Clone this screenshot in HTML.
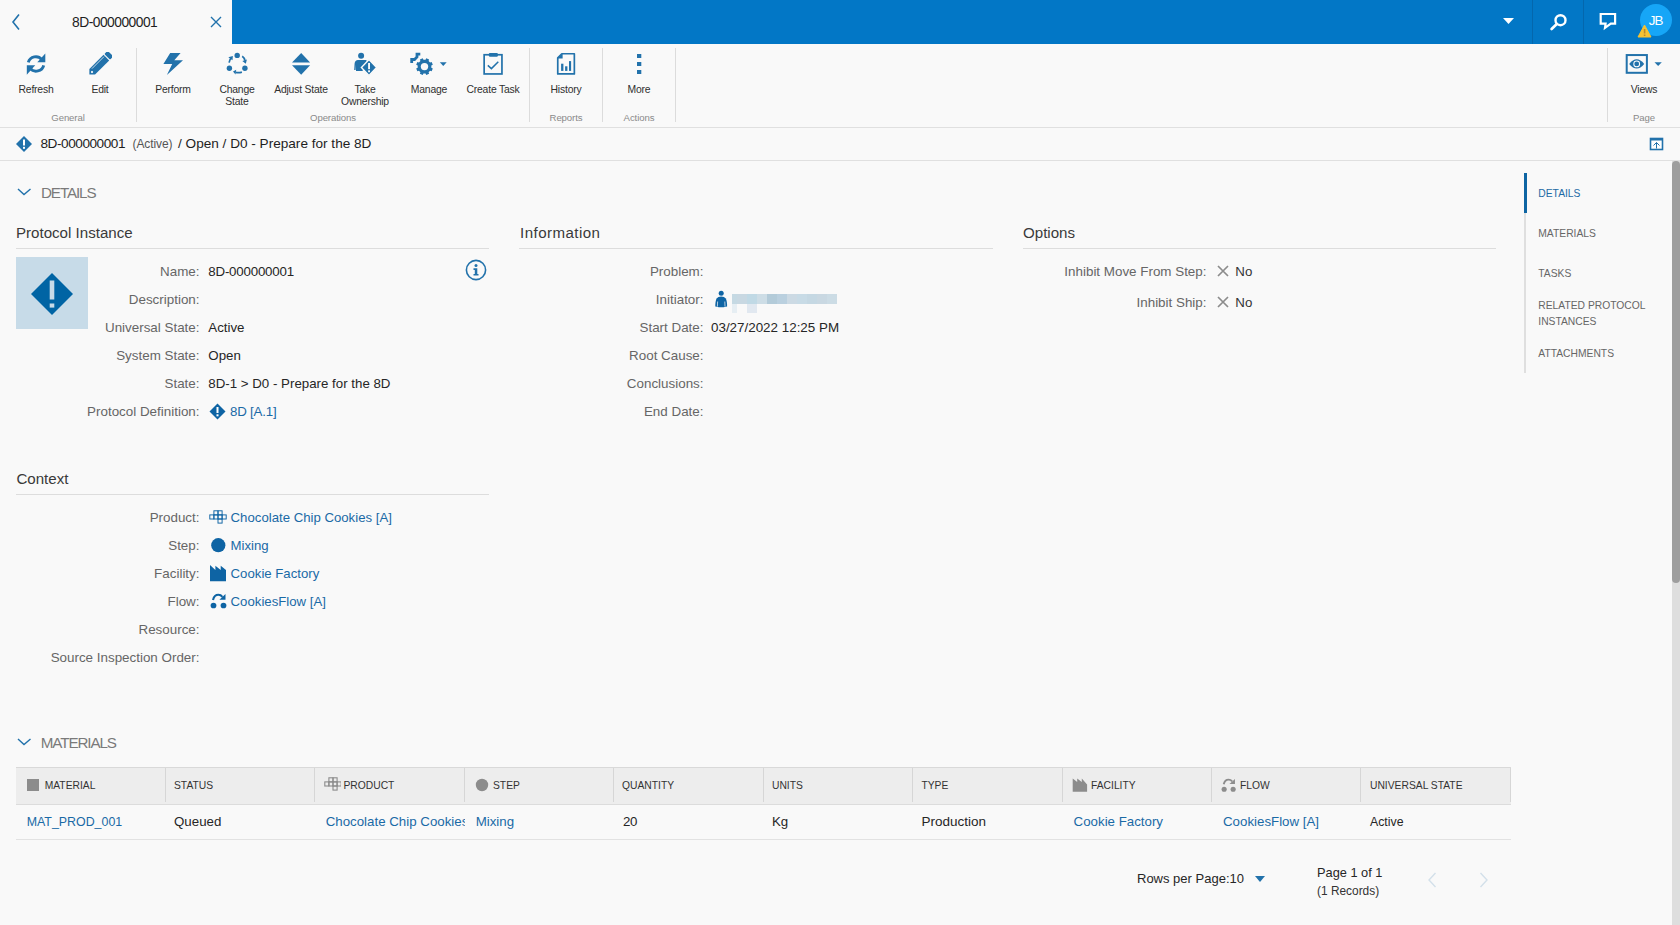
<!DOCTYPE html>
<html><head><meta charset="utf-8"><title>8D-000000001</title>
<style>
html,body{margin:0;padding:0;}
body{width:1680px;height:925px;overflow:hidden;position:relative;background:#f9f9f9;font-family:"Liberation Sans",sans-serif;}
.t{position:absolute;line-height:1;white-space:nowrap;}
.r{position:absolute;display:block;}
</style></head><body>
<div class="r" style="left:0px;top:0px;width:232px;height:44px;background:#f9f9f9;"></div>
<div class="r" style="left:232px;top:0px;width:1448px;height:44px;background:#0277c6;"></div>
<svg class="r" style="left:10px;top:12px" width="12" height="20" viewBox="0 0 12 20"><polyline points="9,2.5 3,10 9,17.5" fill="none" stroke="#2272ab" stroke-width="1.6"/></svg>
<div class="t" style="top:15.92px;font-size:13.8px;color:#1e1e1e;letter-spacing:-0.5px;left:72px;">8D-000000001</div>
<svg class="r" style="left:209px;top:15px" width="14" height="14" viewBox="0 0 14 14"><path d="M2 2 L12 12 M12 2 L2 12" stroke="#2272ab" stroke-width="1.4" fill="none"/></svg>
<svg class="r" style="left:1502px;top:17px" width="13" height="8" viewBox="0 0 13 8"><polygon points="1,1 12,1 6.5,7" fill="#fff"/></svg>
<div class="r" style="left:1532px;top:0px;width:1px;height:44px;background:#0467ad;"></div>
<div class="r" style="left:1583px;top:0px;width:1px;height:44px;background:#0467ad;"></div>
<svg class="r" style="left:1548px;top:12px" width="22" height="20" viewBox="0 0 22 20"><circle cx="12.5" cy="8.2" r="5" fill="none" stroke="#fff" stroke-width="2.4"/><line x1="8.8" y1="12" x2="3.6" y2="17" stroke="#fff" stroke-width="2.7" stroke-linecap="round"/></svg>
<svg class="r" style="left:1598px;top:12px" width="21" height="19" viewBox="0 0 21 19"><path d="M2.7 2 H17.1 V11.7 H12.8 L7 15.8 L7.6 11.7 H2.7 Z" fill="none" stroke="#fff" stroke-width="2.2" stroke-linejoin="miter"/></svg>
<div class="r" style="left:1640px;top:4px;width:32px;height:32px;border-radius:50%;background:#16a6f7"></div>
<div class="t" style="top:13.96px;font-size:13.4px;color:#fff;letter-spacing:-0.9px;left:1455.6px;width:400px;text-align:center;">JB</div>
<svg class="r" style="left:1637px;top:24px" width="15" height="14" viewBox="0 0 15 14"><polygon points="7.5,1 14,13 1,13" fill="#f6c232" stroke="#f6c232" stroke-width="1" stroke-linejoin="round"/><rect x="6.8" y="5" width="1.6" height="4.5" fill="#b9892a"/><rect x="6.8" y="10.5" width="1.6" height="1.5" fill="#b9892a"/></svg>
<div class="r" style="left:0px;top:44px;width:1680px;height:83px;background:#f9f9f9;"></div>
<div class="r" style="left:0px;top:127px;width:1680px;height:1px;background:#e0e0e0;"></div>
<div class="r" style="left:136px;top:48px;width:1px;height:74px;background:#dcdcdc;"></div>
<div class="r" style="left:529px;top:48px;width:1px;height:74px;background:#dcdcdc;"></div>
<div class="r" style="left:602px;top:48px;width:1px;height:74px;background:#dcdcdc;"></div>
<div class="r" style="left:675px;top:48px;width:1px;height:74px;background:#dcdcdc;"></div>
<div class="r" style="left:1607px;top:48px;width:1px;height:74px;background:#dcdcdc;"></div>
<svg class="r" style="left:25px;top:52px" width="22" height="24" viewBox="0 0 22 24"><g fill="none" stroke="#2272ab" stroke-width="2.9"><path d="M3.3 10.3 A7.8 7.8 0 0 1 16.8 7.6"/><path d="M18.7 13.3 A7.8 7.8 0 0 1 5.2 16.4"/></g><polygon points="20.3,1.4 20.3,10.3 12.3,10.3" fill="#2272ab"/><polygon points="1.8,13.3 10.2,13.3 1.8,22.8" fill="#2272ab"/></svg>
<div class="t" style="top:85.20px;font-size:10.4px;color:#303030;letter-spacing:-0.2px;left:-164px;width:400px;text-align:center;">Refresh</div>
<svg class="r" style="left:88px;top:52px" width="24" height="24" viewBox="0 0 24 24"><g transform="translate(12,12) rotate(-45)"><polygon points="-15,0 -11,-4 9,-4 9,4 -11,4" fill="#2272ab"/><rect x="10.2" y="-4" width="4.6" height="8" rx="1" fill="#2272ab"/><line x1="-9" y1="-2.4" x2="8" y2="-2.4" stroke="#f9f9f9" stroke-width="0.7"/><circle cx="-11.3" cy="0" r="1.1" fill="#f9f9f9"/></g></svg>
<div class="t" style="top:85.20px;font-size:10.4px;color:#303030;letter-spacing:-0.2px;left:-100px;width:400px;text-align:center;">Edit</div>
<svg class="r" style="left:162px;top:52px" width="22" height="24" viewBox="0 0 22 24"><polygon points="8.2,1.1 18.6,1.1 12.3,8.2 21,8.2 4.9,23.1 10.2,12.1 1.4,12.1" fill="#2272ab"/></svg>
<div class="t" style="top:85.20px;font-size:10.4px;color:#303030;letter-spacing:-0.2px;left:-27px;width:400px;text-align:center;">Perform</div>
<svg class="r" style="left:226px;top:52px" width="23" height="24" viewBox="0 0 23 24"><g fill="#2272ab"><circle cx="11.2" cy="3.4" r="2.7"/><circle cx="3.4" cy="16.2" r="2.7"/><circle cx="18.9" cy="16.2" r="2.7"/></g><g fill="none" stroke="#2272ab" stroke-width="1.7"><path d="M3.1 10.6 Q3.6 7.4 5.4 5.6"/><path d="M16.2 4.3 Q18.3 5.8 19 8.6"/><path d="M15.9 20.1 Q13 21 9.6 20.4"/></g><g fill="#2272ab"><polygon points="2.3,5.2 6.9,3.9 6.5,8.2"/><polygon points="16.3,8.9 20.9,7.6 19.8,11.8"/><polygon points="7,19.6 10.2,17.8 9.5,22.5"/></g></svg>
<div class="t" style="top:85.20px;font-size:10.4px;color:#303030;letter-spacing:-0.2px;left:37px;width:400px;text-align:center;">Change</div>
<div class="t" style="top:97.20px;font-size:10.4px;color:#303030;letter-spacing:-0.2px;left:37px;width:400px;text-align:center;">State</div>
<svg class="r" style="left:291px;top:52px" width="20" height="24" viewBox="0 0 20 24"><polygon points="10.2,1.1 19.1,10.6 1,10.6" fill="#2272ab"/><polygon points="1,13.3 19.1,13.3 10.2,22.8" fill="#2272ab"/></svg>
<div class="t" style="top:85.20px;font-size:10.4px;color:#303030;letter-spacing:-0.2px;left:101px;width:400px;text-align:center;">Adjust State</div>
<svg class="r" style="left:353px;top:52px" width="25" height="25" viewBox="0 0 25 25"><circle cx="8.1" cy="3.7" r="3" fill="#2272ab"/><path d="M1.2 18 L1.6 11.5 Q2 7.9 5 7.9 L13 7.9 L14 9 L9.5 19 L3 19 L3 12.5 L2.6 18 Z" fill="#2272ab"/><polygon points="16,7.5 23.6,15.6 16,23.6 8.4,15.6" fill="#2272ab" stroke="#f9f9f9" stroke-width="1.4"/><rect x="15.1" y="11" width="1.9" height="6.2" fill="#f9f9f9"/><rect x="15.1" y="18.3" width="1.9" height="1.9" fill="#f9f9f9"/></svg>
<div class="t" style="top:85.20px;font-size:10.4px;color:#303030;letter-spacing:-0.2px;left:165px;width:400px;text-align:center;">Take</div>
<div class="t" style="top:97.20px;font-size:10.4px;color:#303030;letter-spacing:-0.2px;left:165px;width:400px;text-align:center;">Ownership</div>
<svg class="r" style="left:410px;top:52px" width="38" height="25" viewBox="0 0 38 25"><path d="M15.53 7.78 L16.29 6.29 L19.11 7.46 L18.60 9.05 L20.05 10.50 L21.64 9.99 L22.81 12.81 L21.32 13.57 L21.32 15.63 L22.81 16.39 L21.64 19.21 L20.05 18.70 L18.60 20.15 L19.11 21.74 L16.29 22.91 L15.53 21.42 L13.47 21.42 L12.71 22.91 L9.89 21.74 L10.40 20.15 L8.95 18.70 L7.36 19.21 L6.19 16.39 L7.68 15.63 L7.68 13.57 L6.19 12.81 L7.36 9.99 L8.95 10.50 L10.40 9.05 L9.89 7.46 L12.71 6.29 L13.47 7.78 Z" fill="#2272ab"/><circle cx="14.5" cy="14.6" r="3.7" fill="#f9f9f9"/><path d="M1.7 11 L1.7 7.5 L4.5 7.5 L7 5 L7 2.2 L10.3 2.2" fill="none" stroke="#2272ab" stroke-width="2.8" stroke-linejoin="miter"/><polygon points="29.8,10.2 36.7,10.2 33.25,14" fill="#2272ab"/></svg>
<div class="t" style="top:85.20px;font-size:10.4px;color:#303030;letter-spacing:-0.2px;left:229px;width:400px;text-align:center;">Manage</div>
<svg class="r" style="left:482px;top:52px" width="22" height="24" viewBox="0 0 22 24"><rect x="2.15" y="2.75" width="17.8" height="19.2" fill="none" stroke="#2272ab" stroke-width="1.7"/><rect x="6.8" y="0.9" width="9.1" height="3.9" rx="1.2" fill="#2272ab"/><polyline points="5.8,13.4 9.4,16.6 16.3,9.8" fill="none" stroke="#2272ab" stroke-width="1.5"/></svg>
<div class="t" style="top:85.20px;font-size:10.4px;color:#303030;letter-spacing:-0.2px;left:293px;width:400px;text-align:center;">Create Task</div>
<svg class="r" style="left:556px;top:52px" width="20" height="24" viewBox="0 0 20 24"><path d="M1.75 5.8 L5.8 1.75 L18.35 1.75 L18.35 21.95 L1.75 21.95 Z" fill="none" stroke="#2272ab" stroke-width="1.7" stroke-linejoin="round"/><polygon points="1.5,6.6 6.6,1.5 6.6,6.6" fill="#2272ab"/><rect x="5.1" y="11.7" width="2.3" height="7.2" fill="#2272ab"/><rect x="9.1" y="14.3" width="2.3" height="4.6" fill="#2272ab"/><rect x="13" y="9.1" width="2.1" height="9.8" fill="#2272ab"/></svg>
<div class="t" style="top:85.20px;font-size:10.4px;color:#303030;letter-spacing:-0.2px;left:366px;width:400px;text-align:center;">History</div>
<svg class="r" style="left:637px;top:52px" width="5" height="24" viewBox="0 0 5 24"><rect x="0" y="2" width="4.3" height="4" fill="#2272ab"/><rect x="0" y="10" width="4.3" height="4" fill="#2272ab"/><rect x="0" y="18" width="4.3" height="4" fill="#2272ab"/></svg>
<div class="t" style="top:85.20px;font-size:10.4px;color:#303030;letter-spacing:-0.2px;left:439px;width:400px;text-align:center;">More</div>
<svg class="r" style="left:1625px;top:53px" width="38" height="22" viewBox="0 0 38 22"><rect x="1.7" y="2.05" width="20.2" height="17.75" fill="none" stroke="#2272ab" stroke-width="2"/><path d="M4.2 10.9 Q11.7 1.6 19.2 10.9 Q11.7 20.2 4.2 10.9 Z" fill="#2272ab"/><circle cx="11.7" cy="10.9" r="3.4" fill="#fff"/><circle cx="11.7" cy="10.9" r="2.4" fill="#2272ab"/><polygon points="29.5,9.2 36.8,9.2 33.15,13" fill="#2272ab"/></svg>
<div class="t" style="top:85.20px;font-size:10.4px;color:#303030;letter-spacing:-0.2px;left:1444px;width:400px;text-align:center;">Views</div>
<div class="t" style="top:113.17px;font-size:9.6px;color:#8a8a8a;letter-spacing:-0.1px;left:-132px;width:400px;text-align:center;">General</div>
<div class="t" style="top:113.17px;font-size:9.6px;color:#8a8a8a;letter-spacing:-0.1px;left:133px;width:400px;text-align:center;">Operations</div>
<div class="t" style="top:113.17px;font-size:9.6px;color:#8a8a8a;letter-spacing:-0.1px;left:366px;width:400px;text-align:center;">Reports</div>
<div class="t" style="top:113.17px;font-size:9.6px;color:#8a8a8a;letter-spacing:-0.1px;left:439px;width:400px;text-align:center;">Actions</div>
<div class="t" style="top:113.17px;font-size:9.6px;color:#8a8a8a;letter-spacing:-0.1px;left:1444px;width:400px;text-align:center;">Page</div>
<div class="r" style="left:0px;top:160px;width:1680px;height:1px;background:#e0e0e0;"></div>
<svg class="r" style="left:16px;top:136px" width="16" height="16" viewBox="0 0 16 16"><polygon points="8,0 16,8 8,16 0,8" fill="#2272ab"/><rect x="7" y="3.5" width="2" height="6" fill="#fff"/><rect x="7" y="10.8" width="2" height="2" fill="#fff"/></svg>
<div class="t" style="top:137.29px;font-size:13.6px;color:#1e1e1e;letter-spacing:-0.45px;left:40.5px;">8D-000000001</div>
<div class="t" style="top:138.04px;font-size:12px;color:#555;letter-spacing:-0.1px;left:132.5px;">(Active)</div>
<div class="t" style="top:137.29px;font-size:13.6px;color:#1e1e1e;left:178px;">/ Open / D0 - Prepare for the 8D</div>
<svg class="r" style="left:1649px;top:137px" width="15" height="14" viewBox="0 0 15 14"><rect x="1.5" y="1.5" width="12" height="11" fill="#fff" stroke="#2272ab" stroke-width="1.6"/><rect x="1" y="1" width="13" height="2.5" fill="#2272ab"/><path d="M7.5 11.5 V5.5 M4.5 8.5 L7.5 5.5 L10.5 8.5" fill="none" stroke="#2272ab" stroke-width="1"/></svg>
<div class="r" style="left:1672px;top:161px;width:8px;height:1680px;background:#dedede;"></div>
<div class="r" style="left:1672px;top:161px;width:8px;height:422px;background:#9e9e9e;border-radius:4px"></div>
<svg class="r" style="left:16px;top:186px" width="16" height="10" viewBox="0 0 16 10"><polyline points="2,3 8,8.6 14.5,3" fill="none" stroke="#2272ab" stroke-width="1.4"/></svg>
<div class="t" style="top:185.13px;font-size:15.2px;color:#7a7a7a;letter-spacing:-1.1px;left:41px;">DETAILS</div>
<div class="t" style="top:225.42px;font-size:15.1px;color:#3a3a3a;left:16px;">Protocol Instance</div>
<div class="r" style="left:16px;top:248px;width:473px;height:1px;background:#dddddd;"></div>
<div class="t" style="top:225.42px;font-size:15.1px;color:#3a3a3a;letter-spacing:0.45px;left:520px;">Information</div>
<div class="r" style="left:519px;top:248px;width:474px;height:1px;background:#dddddd;"></div>
<div class="r" style="left:519px;top:248px;width:1px;height:1px;background:#dddddd;"></div>
<div class="t" style="top:225.42px;font-size:15.1px;color:#3a3a3a;left:1023px;">Options</div>
<div class="r" style="left:1023px;top:248px;width:473px;height:1px;background:#dddddd;"></div>
<div class="r" style="left:16px;top:257px;width:72px;height:72px;background:#c7dbe8;"></div>
<svg class="r" style="left:31px;top:273px" width="42" height="42" viewBox="0 0 42 42"><polygon points="21,0 42,21 21,42 0,21" fill="#0064a4"/><rect x="18.7" y="7.5" width="4.6" height="19" fill="#c7dbe8"/><rect x="18.7" y="30.5" width="4.6" height="4.1" fill="#c7dbe8"/></svg>
<svg class="r" style="left:465px;top:259px" width="22" height="22" viewBox="0 0 22 22"><circle cx="11" cy="11" r="9.6" fill="none" stroke="#2272ab" stroke-width="1.6"/><circle cx="11" cy="6.5" r="1.5" fill="#2272ab"/><path d="M8.5 9.3 H12.3 V15 H13.5 V16.6 H8.5 V15 H9.8 V10.9 H8.5 Z" fill="#2272ab"/></svg>
<div class="t" style="top:264.66px;font-size:13.4px;color:#666666;right:1480.5px;white-space:nowrap;">Name:</div>
<div class="t" style="top:264.74px;font-size:13.3px;color:#262626;letter-spacing:-0.2px;left:208.3px;white-space:nowrap;">8D-000000001</div>
<div class="t" style="top:292.66px;font-size:13.4px;color:#666666;right:1480.5px;white-space:nowrap;">Description:</div>
<div class="t" style="top:320.66px;font-size:13.4px;color:#666666;right:1480.5px;white-space:nowrap;">Universal State:</div>
<div class="t" style="top:320.74px;font-size:13.3px;color:#262626;left:208.3px;white-space:nowrap;">Active</div>
<div class="t" style="top:348.66px;font-size:13.4px;color:#666666;right:1480.5px;white-space:nowrap;">System State:</div>
<div class="t" style="top:348.74px;font-size:13.3px;color:#262626;left:208.3px;white-space:nowrap;">Open</div>
<div class="t" style="top:376.66px;font-size:13.4px;color:#666666;right:1480.5px;white-space:nowrap;">State:</div>
<div class="t" style="top:376.74px;font-size:13.3px;color:#262626;left:208.3px;white-space:nowrap;">8D-1 &gt; D0 - Prepare for the 8D</div>
<div class="t" style="top:404.66px;font-size:13.4px;color:#666666;right:1480.5px;white-space:nowrap;">Protocol Definition:</div>
<svg class="r" style="left:209px;top:403px" width="17" height="17" viewBox="0 0 17 17"><polygon points="8.5,0.5 16.5,8.5 8.5,16.5 0.5,8.5" fill="#0e64a4"/><rect x="7.5" y="4" width="2" height="6" fill="#fff"/><rect x="7.5" y="11.3" width="2" height="2" fill="#fff"/></svg>
<div class="t" style="top:404.74px;font-size:13.3px;color:#1a6aa6;letter-spacing:-0.2px;left:230px;">8D [A.1]</div>
<div class="t" style="top:264.66px;font-size:13.4px;color:#666666;right:976.5px;white-space:nowrap;">Problem:</div>
<div class="t" style="top:292.66px;font-size:13.4px;color:#666666;right:976.5px;white-space:nowrap;">Initiator:</div>
<div class="t" style="top:320.66px;font-size:13.4px;color:#666666;right:976.5px;white-space:nowrap;">Start Date:</div>
<div class="t" style="top:348.66px;font-size:13.4px;color:#666666;right:976.5px;white-space:nowrap;">Root Cause:</div>
<div class="t" style="top:376.66px;font-size:13.4px;color:#666666;right:976.5px;white-space:nowrap;">Conclusions:</div>
<div class="t" style="top:404.66px;font-size:13.4px;color:#666666;right:976.5px;white-space:nowrap;">End Date:</div>
<div class="t" style="top:320.66px;font-size:13.4px;color:#262626;left:711px;white-space:nowrap;">03/27/2022 12:25 PM</div>
<svg class="r" style="left:714px;top:290px" width="15" height="18" viewBox="0 0 15 18"><circle cx="7.2" cy="3.2" r="2.5" fill="#0e64a4"/><path d="M1.3 16.5 Q1.3 11 2.6 8.6 Q4 6.6 7.2 6.6 Q10.4 6.6 11.8 8.6 Q13.1 11 13.1 16.5 L11.8 16.8 Q9.5 17.3 7.2 17.3 Q4.9 17.3 2.6 16.8 Z" fill="#0e64a4"/><path d="M3.6 11.5 L3.4 16.6 M10.8 11.5 L11 16.6" stroke="#f9f9f9" stroke-width="0.7"/></svg>
<div class="r" style="left:732.1px;top:293.8px;width:4.5px;height:10.1px;background:#c5d9e3;"></div>
<div class="r" style="left:736.6px;top:293.8px;width:10.3px;height:10.1px;background:#c8d8e2;"></div>
<div class="r" style="left:746.9px;top:293.8px;width:10.0px;height:10.1px;background:#c0d9e5;"></div>
<div class="r" style="left:756.9px;top:293.8px;width:10.1px;height:10.1px;background:#cddde6;"></div>
<div class="r" style="left:767px;top:293.8px;width:10px;height:10.1px;background:#b3cbd9;"></div>
<div class="r" style="left:777px;top:293.8px;width:10px;height:10.1px;background:#bad0df;"></div>
<div class="r" style="left:787px;top:293.8px;width:10px;height:10.1px;background:#ccdae4;"></div>
<div class="r" style="left:797px;top:293.8px;width:10px;height:10.1px;background:#c8dbe6;"></div>
<div class="r" style="left:807px;top:293.8px;width:10px;height:10.1px;background:#c5d8e3;"></div>
<div class="r" style="left:817px;top:293.8px;width:10px;height:10.1px;background:#c9d8e2;"></div>
<div class="r" style="left:827px;top:293.8px;width:10px;height:10.1px;background:#ccdce5;"></div>
<div class="r" style="left:732.1px;top:303.9px;width:4.5px;height:8.8px;background:#e6eef3;"></div>
<div class="r" style="left:746.9px;top:303.9px;width:10px;height:8.8px;background:#e1e8f0;"></div>
<div class="t" style="top:264.66px;font-size:13.4px;color:#666666;right:473.5px;white-space:nowrap;">Inhibit Move From Step:</div>
<svg class="r" style="left:1216px;top:265px" width="14" height="12" viewBox="0 0 14 12"><path d="M2 1 L12 11 M12 1 L2 11" stroke="#8c8c8c" stroke-width="1.7"/></svg>
<div class="t" style="top:264.74px;font-size:13.3px;color:#333;left:1235.3px;">No</div>
<div class="t" style="top:295.66px;font-size:13.4px;color:#666666;right:473.5px;white-space:nowrap;">Inhibit Ship:</div>
<svg class="r" style="left:1216px;top:296px" width="14" height="12" viewBox="0 0 14 12"><path d="M2 1 L12 11 M12 1 L2 11" stroke="#8c8c8c" stroke-width="1.7"/></svg>
<div class="t" style="top:295.74px;font-size:13.3px;color:#333;left:1235.3px;">No</div>
<div class="r" style="left:1524px;top:173px;width:2px;height:200px;background:#dfdfdf;"></div>
<div class="r" style="left:1523.5px;top:173px;width:3px;height:40px;background:#0e65a3;"></div>
<div class="t" style="top:188.58px;font-size:10.3px;color:#1d6aa5;left:1538.3px;white-space:nowrap;">DETAILS</div>
<div class="t" style="top:228.58px;font-size:10.3px;color:#666;left:1538.3px;white-space:nowrap;">MATERIALS</div>
<div class="t" style="top:269.28px;font-size:10.3px;color:#666;left:1538.3px;white-space:nowrap;">TASKS</div>
<div class="t" style="top:301.28px;font-size:10.3px;color:#666;left:1538.3px;white-space:nowrap;">RELATED PROTOCOL</div>
<div class="t" style="top:317.28px;font-size:10.3px;color:#666;left:1538.3px;white-space:nowrap;">INSTANCES</div>
<div class="t" style="top:349.28px;font-size:10.3px;color:#666;left:1538.3px;white-space:nowrap;">ATTACHMENTS</div>
<div class="t" style="top:471.42px;font-size:15.1px;color:#3a3a3a;left:16.4px;">Context</div>
<div class="r" style="left:16px;top:494px;width:473px;height:1px;background:#dddddd;"></div>
<div class="t" style="top:510.66px;font-size:13.4px;color:#666666;right:1480.5px;white-space:nowrap;">Product:</div>
<div class="t" style="top:538.66px;font-size:13.4px;color:#666666;right:1480.5px;white-space:nowrap;">Step:</div>
<div class="t" style="top:566.66px;font-size:13.4px;color:#666666;right:1480.5px;white-space:nowrap;">Facility:</div>
<div class="t" style="top:594.66px;font-size:13.4px;color:#666666;right:1480.5px;white-space:nowrap;">Flow:</div>
<div class="t" style="top:622.66px;font-size:13.4px;color:#666666;right:1480.5px;white-space:nowrap;">Resource:</div>
<div class="t" style="top:650.66px;font-size:13.4px;color:#666666;right:1480.5px;white-space:nowrap;">Source Inspection Order:</div>
<div class="t" style="top:510.83px;font-size:13.2px;color:#1a6aa6;left:230.6px;white-space:nowrap;">Chocolate Chip Cookies [A]</div>
<div class="t" style="top:538.83px;font-size:13.2px;color:#1a6aa6;left:230.6px;">Mixing</div>
<div class="t" style="top:566.83px;font-size:13.2px;color:#1a6aa6;left:230.6px;">Cookie Factory</div>
<div class="t" style="top:594.83px;font-size:13.2px;color:#1a6aa6;left:230.6px;white-space:nowrap;">CookiesFlow [A]</div>
<svg class="r" style="left:209px;top:510px" width="18" height="14" viewBox="0 0 18 14"><g fill="none" stroke="#0e64a4" stroke-width="0.95"><rect x="4.90" y="0.80" width="4.10" height="4.10"/><rect x="9.00" y="0.80" width="4.10" height="4.10"/><rect x="0.80" y="4.90" width="4.10" height="4.10"/><rect x="4.90" y="4.90" width="4.10" height="4.10"/><rect x="9.00" y="4.90" width="4.10" height="4.10"/><rect x="13.10" y="4.90" width="4.10" height="4.10"/><rect x="9.00" y="9.00" width="4.10" height="4.10"/></g></svg>
<svg class="r" style="left:210px;top:537px" width="16" height="16" viewBox="0 0 16 16"><circle cx="8.3" cy="8.2" r="7.1" fill="#0e64a4"/></svg>
<svg class="r" style="left:210px;top:565px" width="17" height="17" viewBox="0 0 17 17"><polygon points="0,0.1 5.4,4.9 5.4,0.7 10.7,4.9 10.7,0.7 16,4.9 16,16.2 0,16.2" fill="#0e64a4"/></svg>
<svg class="r" style="left:209.5px;top:593px" width="18" height="16" viewBox="0 0 18 16"><circle cx="3.5" cy="12.5" r="2.86" fill="#0e64a4"/><circle cx="13.5" cy="12.5" r="2.86" fill="#0e64a4"/><path d="M3 7 Q4.3 1.8 8.4 1.8 Q10.8 1.8 12.4 3.8" fill="none" stroke="#0e64a4" stroke-width="2.1"/><polygon points="15.5,1 15.5,6.8 9.4,6.8" fill="#0e64a4"/></svg>
<svg class="r" style="left:16px;top:736px" width="16" height="10" viewBox="0 0 16 10"><polyline points="2,3 8,8.6 14.5,3" fill="none" stroke="#2272ab" stroke-width="1.4"/></svg>
<div class="t" style="top:735.23px;font-size:15.2px;color:#7a7a7a;letter-spacing:-1.1px;left:40.8px;">MATERIALS</div>
<div class="r" style="left:16px;top:767px;width:1495px;height:1px;background:#d9d9d9;"></div>
<div class="r" style="left:16px;top:768px;width:1495px;height:36px;background:#ededed;"></div>
<div class="r" style="left:16px;top:804px;width:1495px;height:1px;background:#dcdcdc;"></div>
<div class="r" style="left:16px;top:839px;width:1495px;height:1px;background:#e2e2e2;"></div>
<div class="r" style="left:165px;top:768px;width:1px;height:34px;background:#d6d6d6;"></div>
<div class="r" style="left:314px;top:768px;width:1px;height:34px;background:#d6d6d6;"></div>
<div class="r" style="left:464px;top:768px;width:1px;height:34px;background:#d6d6d6;"></div>
<div class="r" style="left:613px;top:768px;width:1px;height:34px;background:#d6d6d6;"></div>
<div class="r" style="left:763px;top:768px;width:1px;height:34px;background:#d6d6d6;"></div>
<div class="r" style="left:912px;top:768px;width:1px;height:34px;background:#d6d6d6;"></div>
<div class="r" style="left:1062px;top:768px;width:1px;height:34px;background:#d6d6d6;"></div>
<div class="r" style="left:1211px;top:768px;width:1px;height:34px;background:#d6d6d6;"></div>
<div class="r" style="left:1360px;top:768px;width:1px;height:34px;background:#d6d6d6;"></div>
<div class="r" style="left:1510px;top:768px;width:1px;height:34px;background:#d6d6d6;"></div>
<div class="t" style="top:781.28px;font-size:10.3px;color:#333;left:44.7px;white-space:nowrap;">MATERIAL</div>
<div class="t" style="top:781.28px;font-size:10.3px;color:#333;left:174px;white-space:nowrap;">STATUS</div>
<div class="t" style="top:781.28px;font-size:10.3px;color:#333;left:343.5px;white-space:nowrap;">PRODUCT</div>
<div class="t" style="top:781.28px;font-size:10.3px;color:#333;left:493px;white-space:nowrap;">STEP</div>
<div class="t" style="top:781.28px;font-size:10.3px;color:#333;left:622px;white-space:nowrap;">QUANTITY</div>
<div class="t" style="top:781.28px;font-size:10.3px;color:#333;left:772px;white-space:nowrap;">UNITS</div>
<div class="t" style="top:781.28px;font-size:10.3px;color:#333;left:921.4px;white-space:nowrap;">TYPE</div>
<div class="t" style="top:781.28px;font-size:10.3px;color:#333;left:1091px;white-space:nowrap;">FACILITY</div>
<div class="t" style="top:781.28px;font-size:10.3px;color:#333;left:1240px;white-space:nowrap;">FLOW</div>
<div class="t" style="top:781.28px;font-size:10.3px;color:#333;left:1370px;white-space:nowrap;">UNIVERSAL STATE</div>
<div class="r" style="left:27px;top:779px;width:12px;height:12px;background:#8c8c8c;"></div>
<svg class="r" style="left:324px;top:777px" width="17" height="14" viewBox="0 0 17 14"><g fill="none" stroke="#8c8c8c" stroke-width="1.1"><rect x="4.90" y="0.80" width="4.10" height="4.10"/><rect x="9.00" y="0.80" width="4.10" height="4.10"/><rect x="0.80" y="4.90" width="4.10" height="4.10"/><rect x="4.90" y="4.90" width="4.10" height="4.10"/><rect x="9.00" y="4.90" width="4.10" height="4.10"/><rect x="13.10" y="4.90" width="4.10" height="4.10"/><rect x="9.00" y="9.00" width="4.10" height="4.10"/></g></svg>
<svg class="r" style="left:475px;top:778px" width="14" height="14" viewBox="0 0 14 14"><circle cx="7" cy="7" r="6.2" fill="#8c8c8c"/></svg>
<svg class="r" style="left:1071.5px;top:778px" width="16" height="15" viewBox="0 0 16 15"><polygon points="0.7,0.5 5.2,3.9 5.2,0.5 9.8,3.9 9.8,0.5 15.1,6.4 15.1,13.7 0.7,13.7" fill="#8c8c8c"/></svg>
<svg class="r" style="left:1221px;top:778px" width="16" height="15" viewBox="0 0 16 15"><g transform="scale(0.9)"><circle cx="3.5" cy="12.5" r="2.86" fill="#8c8c8c"/><circle cx="13.5" cy="12.5" r="2.86" fill="#8c8c8c"/><path d="M3 7 Q4.3 1.8 8.4 1.8 Q10.8 1.8 12.4 3.8" fill="none" stroke="#8c8c8c" stroke-width="2.1"/><polygon points="15.5,1 15.5,6.8 9.4,6.8" fill="#8c8c8c"/></g></svg>
<div class="t" style="top:816.00px;font-size:12.4px;color:#1a6aa6;left:26.7px;white-space:nowrap;">MAT_PROD_001</div>
<div class="t" style="top:815.24px;font-size:13.3px;color:#262626;left:174px;">Queued</div>
<div class="t" style="left:325.7px;top:815.24px;width:139px;overflow:hidden;font-size:13.3px;color:#1a6aa6;white-space:nowrap">Chocolate Chip Cookies [A]</div>
<div class="t" style="top:815.24px;font-size:13.3px;color:#1a6aa6;left:475.7px;">Mixing</div>
<div class="t" style="top:815.24px;font-size:13.3px;color:#262626;letter-spacing:-0.3px;left:622.9px;">20</div>
<div class="t" style="top:815.24px;font-size:13.3px;color:#262626;left:772px;">Kg</div>
<div class="t" style="top:815.07px;font-size:13.5px;color:#262626;left:921.4px;">Production</div>
<div class="t" style="top:815.24px;font-size:13.3px;color:#1a6aa6;left:1073.6px;white-space:nowrap;">Cookie Factory</div>
<div class="t" style="top:815.24px;font-size:13.3px;color:#1a6aa6;left:1223px;white-space:nowrap;">CookiesFlow [A]</div>
<div class="t" style="top:816.09px;font-size:12.3px;color:#262626;left:1370px;">Active</div>
<div class="t" style="top:872.30px;font-size:13px;color:#262626;left:1137px;white-space:nowrap;">Rows per Page:10</div>
<svg class="r" style="left:1254px;top:875px" width="12" height="8" viewBox="0 0 12 8"><polygon points="1,1 11,1 6,7" fill="#2272ab"/></svg>
<div class="t" style="top:867.16px;font-size:12.8px;color:#262626;left:1317px;white-space:nowrap;">Page 1 of 1</div>
<div class="t" style="top:885.93px;font-size:11.9px;color:#333;left:1317px;white-space:nowrap;">(1 Records)</div>
<svg class="r" style="left:1426px;top:871px" width="12" height="18" viewBox="0 0 12 18"><polyline points="9.5,2 3,9 9.5,16" fill="none" stroke="#d3e0ea" stroke-width="1.4"/></svg>
<svg class="r" style="left:1478px;top:871px" width="12" height="18" viewBox="0 0 12 18"><polyline points="2.5,2 9,9 2.5,16" fill="none" stroke="#d3e0ea" stroke-width="1.4"/></svg>
</body></html>
